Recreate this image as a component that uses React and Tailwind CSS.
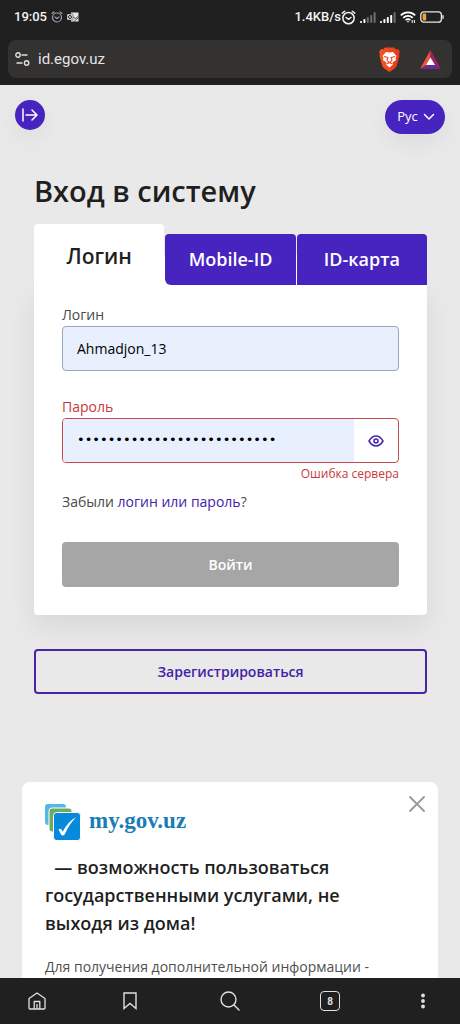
import { useState } from 'react';

const TABS = [
  { id: 'login', label: 'Логин' },
  { id: 'mobile', label: 'Mobile-ID' },
  { id: 'card', label: 'ID-карта' }
];

function AlarmIcon({ className }) {
  return (
    <svg viewBox="0 0 24 24" fill="none" stroke="currentColor" strokeWidth="2.4" strokeLinecap="round" className={className}>
      <circle cx="12" cy="13" r="9" />
      <path d="M8 12l4 3 4-3M2 5l4-3M22 5l-4-3" />
    </svg>
  );
}

function OutlookIcon() {
  return (
    <svg viewBox="0 0 24 20" className="h-[10px] w-3 text-gray-200">
      <path fill="currentColor" d="M8 1h15v18H8z" />
      <path fill="none" stroke="#202020" strokeWidth="1.5" d="M12 10l5 3 6-5M14 19l9-8" />
      <rect x="0" y="4" width="12" height="12" rx="1" fill="currentColor" stroke="#202020" />
      <circle cx="6" cy="10" r="3" fill="none" stroke="#202020" strokeWidth="2" />
    </svg>
  );
}

function SignalIcon({ level }) {
  return (
    <svg viewBox="0 0 16 11" fill="#fff" className="h-[11px] w-4">
      {[2, 4, 6, 8, 11].map((h, i) => (
        <rect key={h} x={i * 3.4} y={11 - h} width="2" height={h} rx="0.8" opacity={i < level ? 1 : 0.35} />
      ))}
    </svg>
  );
}

function WifiIcon() {
  return (
    <svg viewBox="0 0 16 12" fill="none" stroke="#fff" strokeWidth="1.6" className="h-3 w-4">
      <path d="M0.8 4.3a10.4 10.4 0 0 1 14.4 0M3.2 6.8a7 7 0 0 1 9.6 0M5.6 9.2a3.6 3.6 0 0 1 4.8 0" />
      <path d="M6.6 10.2L8 11.8l1.4-1.6z" fill="#fff" stroke="none" />
      <path d="M12.2 9v3M14.4 9v3" strokeWidth="1" />
    </svg>
  );
}

function BatteryIcon() {
  return (
    <svg viewBox="0 0 24 12" className="h-3 w-6">
      <rect x="0.8" y="0.8" width="20.6" height="10.4" rx="3" fill="none" stroke="#e8e8e8" strokeWidth="1.3" />
      <rect x="2.6" y="2.6" width="3.6" height="6.8" rx="1" fill="#e8a33a" />
      <rect x="22.3" y="4" width="1.4" height="4" rx="0.7" fill="#e8e8e8" />
    </svg>
  );
}

function TuneIcon() {
  return (
    <svg viewBox="0 0 15 14" fill="none" stroke="#e2e2e2" strokeWidth="1.4" strokeLinecap="round" className="h-[14px] w-[15px]">
      <circle cx="3" cy="3" r="2.2" />
      <path d="M7 3h5M2 11h5" />
      <circle cx="11.6" cy="11" r="2.2" />
    </svg>
  );
}

function BraveIcon() {
  return (
    <svg viewBox="0 0 42 50" className="h-[25px] w-[21px]">
      <defs>
        <linearGradient id="brave">
          <stop offset="0" stopColor="#f4571e" />
          <stop offset="1" stopColor="#e8361c" />
        </linearGradient>
      </defs>
      <path fill="url(#brave)" d="M12 1h18l4 4 4-1 4 6-2 4 1 4-6 21-5 5-9 6-9-6-5-5L1 18l1-4-2-4 4-6 4 1z" />
      <path fill="#fff" d="M14 10l7 1 7-1 7 8-2 4 1 4-7 5 1 4-7 6-7-6 1-4-7-5 1-4-2-4z" />
      <path fill="none" stroke="#e9441e" strokeWidth="2.2" strokeLinejoin="round" d="M10 19l8 2-2 5 3 4h4l3-4-2-5 8-2M15 34l6-3 6 3M21 29v3" />
    </svg>
  );
}

function BatIcon() {
  return (
    <svg viewBox="0 0 42 38" className="h-[19px] w-[21px]">
      <path fill="#f0523c" d="M21 0L0 38l13-8 8-14z" />
      <path fill="#9e1f63" d="M21 0l21 38-13-8-8-14z" />
      <path fill="#662d91" d="M0 38h42l-13-8H13z" />
      <path fill="#fff" d="M21 15l9 15H12z" />
    </svg>
  );
}

function GovLogo() {
  return (
    <svg viewBox="0 0 36 37" className="h-[37px] w-9">
      <rect x="0" y="0" width="21" height="21" rx="3" fill="#56b9e4" />
      <rect x="4" y="4" width="23" height="24" rx="3" fill="#6cab63" stroke="#fff" />
      <rect x="8.5" y="8.5" width="27" height="28" rx="3" fill="#088adb" stroke="#fff" />
      <path fill="#fff" d="M13.5 25.5c1.5-1.8 3.2-.6 4.2 2.2 3.2-6.2 7.6-11.4 13.6-14.8-4.6 4.6-8.6 10.4-11.5 17.3-1 1.6-3.2 1.6-3.8.2z" />
    </svg>
  );
}

function StatusBar() {
  return (
    <div className="flex h-[34px] items-center justify-between pr-4 pl-[14px] font-[Roboto,sans-serif] text-[13px] font-medium text-gray-100">
      <div className="flex items-center gap-1">
        <span>19:05</span>
        <AlarmIcon className="h-3 w-3 text-gray-400" />
        <OutlookIcon />
      </div>
      <div className="flex items-center gap-1">
        <div className="flex items-center">
          <span>1.4KB/s</span>
          <AlarmIcon className="h-[15px] w-[15px]" />
        </div>
        <SignalIcon level={2} />
        <SignalIcon level={4} />
        <WifiIcon />
        <BatteryIcon />
      </div>
    </div>
  );
}

function AddressBar() {
  return (
    <div className="mx-2 mt-[6px] flex h-[38px] items-center rounded-lg bg-[#333230] pr-[11px] pl-[7px]">
      <button aria-label="Настройки сайта"><TuneIcon /></button>
      <a href="#" className="ml-2 flex-1 font-[Roboto,sans-serif] text-[15px] text-[#e4e4e4]">id.egov.uz</a>
      <button aria-label="Brave Shields"><BraveIcon /></button>
      <button aria-label="Brave Rewards" className="ml-5"><BatIcon /></button>
    </div>
  );
}

function LoginForm() {
  const [login, setLogin] = useState('Ahmadjon_13');
  const [password, setPassword] = useState('abcdefghijklmnopqrstuvwxyz');
  const [visible, setVisible] = useState(false);

  return (
    <form
      className="rounded-b bg-white px-7 pt-5 pb-7 text-sm text-[#4a4a4a] shadow-[0_12px_30px_rgba(0,0,0,0.08)]"
      onSubmit={(e) => e.preventDefault()}
    >
      <label htmlFor="login" className="block leading-5">Логин</label>
      <input
        id="login"
        value={login}
        onChange={(e) => setLogin(e.target.value)}
        className="mt-px h-[45px] w-full rounded border border-[#9ba6bd] bg-[#e8effd] px-[14px] text-sm text-black outline-none"
      />

      <label htmlFor="password" className="mt-[25px] block leading-[22px] text-[#c8383c]">Пароль</label>
      <div className="flex h-[45px] overflow-hidden rounded border border-[#c8484c]">
        <input
          id="password"
          type={visible ? 'text' : 'password'}
          value={password}
          onChange={(e) => setPassword(e.target.value)}
          className={`min-w-0 flex-1 bg-[#e8effd] px-[14px] text-black outline-none ${
            visible ? 'text-sm' : "font-['DejaVu_Sans',sans-serif] text-[13px]"
          }`}
        />
        <button type="button" aria-label="Показать пароль" onClick={() => setVisible(!visible)} className="flex w-11 items-center justify-center">
          <svg viewBox="0 0 16 12" fill="none" stroke="#4724a8" strokeWidth="1.5" className="h-3 w-4">
            <path d="M1 6c2-3.4 4.3-5 7-5s5 1.6 7 5c-2 3.4-4.3 5-7 5s-5-1.6-7-5z" />
            <circle cx="8" cy="6" r="2" />
          </svg>
        </button>
      </div>
      <p className="text-right text-xs leading-[22px] text-[#c8383c]">Ошибка сервера</p>

      <p className="mt-[7px] leading-5">
        Забыли <a href="#" className="text-[#4421a8]">логин или пароль</a>?
      </p>
      <button type="submit" className="mt-[30px] h-[45px] w-full rounded bg-[#a6a6a6] font-semibold text-white">Войти</button>
    </form>
  );
}

function Promo() {
  return (
    <section className="mx-[22px] mt-[88px] rounded-lg bg-white px-[23px] pt-[22px] pb-8">
      <div className="flex items-start justify-between">
        <a href="#" className="flex items-center gap-2">
          <GovLogo />
          <span className="pb-0.5 font-['Liberation_Serif',serif] text-[23px] font-bold text-[#1a7db3]">my.gov.uz</span>
        </a>
        <button aria-label="Закрыть" className="-mt-2 -mr-[10px]">
          <svg viewBox="0 0 16 16" stroke="#9a9a9a" strokeWidth="1.8" strokeLinecap="round" className="h-4 w-4">
            <path d="M1 1l14 14M15 1L1 15" />
          </svg>
        </button>
      </div>
      <h2 className="mt-3 pr-10 text-lg leading-7 font-semibold text-[#1f1f1f]">
        &nbsp; — возможность пользоваться государственными услугами, не выходя из дома!
      </h2>
      <p className="mt-[18px] text-sm leading-6 text-[#4f4f4f]">Для получения дополнительной информации -</p>
    </section>
  );
}

function BottomNav() {
  return (
    <nav className="grid h-[46px] shrink-0 grid-cols-[74fr_112fr_88fr_112fr_74fr] items-center justify-items-center bg-[#202020] text-[#e0e0e0]">
      <button aria-label="Домой">
        <svg viewBox="0 0 18 18" fill="none" stroke="currentColor" strokeWidth="1.3" strokeLinejoin="round" className="h-[18px] w-[18px]">
          <path d="M1 6.5L9 1l8 5.500V16a1 1 0 0 1-1 1H2a1 1 0 0 1-1-1zM6.2 17V9.5h5.6V17M9 12v5" />
        </svg>
      </button>
      <button aria-label="Закладки">
        <svg viewBox="0 0 14 18" fill="none" stroke="currentColor" strokeWidth="1.4" className="h-[18px] w-[14px]">
          <path d="M1 1h12v15.5l-6-5-6 5z" />
        </svg>
      </button>
      <button aria-label="Поиск">
        <svg viewBox="0 0 20 20" fill="none" stroke="currentColor" strokeWidth="1.4" strokeLinecap="round" className="h-5 w-5">
          <circle cx="8.5" cy="8.5" r="7.5" />
          <path d="M14 14l5 5" />
        </svg>
      </button>
      <button aria-label="Вкладки" className="flex h-5 w-5 items-center justify-center rounded border border-[#e0e0e0] font-[Roboto,sans-serif] text-[10px] font-bold">8</button>
      <button aria-label="Меню">
        <svg viewBox="0 0 18 18" fill="currentColor" className="h-[18px] w-[18px]">
          <circle cx="9" cy="3.500" r="1.9" />
          <circle cx="9" cy="9" r="1.9" />
          <circle cx="9" cy="14.500" r="1.9" />
        </svg>
      </button>
    </nav>
  );
}

export default function App() {
  const [tab, setTab] = useState('login');

  return (
    <div className="flex h-screen flex-col bg-[#e9e9e9] font-['Open_Sans','Noto_Sans',sans-serif]">
      <header className="shrink-0 bg-[#202020] pb-[7px]">
        <StatusBar />
        <AddressBar />
      </header>

      <main className="min-h-0 flex-1 overflow-y-auto [scrollbar-width:none]">
        <div className="flex items-start justify-between px-[15px] pt-[15px]">
          <button aria-label="Выйти" className="flex h-[30px] w-[30px] items-center justify-center rounded-full bg-[#4724bf] shadow-[0_8px_24px_rgba(0,0,0,0.06)]">
            <svg viewBox="0 0 16 14" fill="none" stroke="#fff" strokeWidth="1.5" strokeLinecap="round" strokeLinejoin="round" className="h-[14px] w-4">
              <path d="M1 1v12M4 7h11M10 2l5 5-5 5" />
            </svg>
          </button>
          <button className="flex h-[34px] w-[60px] items-center justify-center gap-[5px] rounded-full bg-[#4724bf] pl-0.5 text-[13px] text-white shadow-[0_8px_24px_rgba(0,0,0,0.06)]">
            Рус
            <svg viewBox="0 0 12 8" fill="none" stroke="currentColor" strokeWidth="1.5" strokeLinecap="round" strokeLinejoin="round" className="h-2 w-3">
              <path d="M1.5 1.5L6 6l4.5-4.5" />
            </svg>
          </button>
        </div>

        <div className="pr-[33px] pl-[34px]">
          <h1 className="mt-9 text-[29px] leading-[42px] font-semibold text-[#1f1f1f]">Вход в систему</h1>
          <div className="relative z-10 mt-3 flex items-end gap-px bg-[linear-gradient(#e9e9e9_50%,#fff_50%)]">
            {TABS.map((t) => (
              <button
                key={t.id}
                onClick={() => setTab(t.id)}
                className={`flex-1 rounded-t font-semibold ${
                  tab === t.id
                    ? 'h-[61px] bg-white pt-1 text-[21px] text-[#1f1f1f]'
                    : 'h-[51px] bg-[#4724bf] pb-0.5 text-lg text-white nth-2:rounded-bl-md'
                }`}
              >
                {t.label}
              </button>
            ))}
          </div>
          <LoginForm />
          <button className="mt-[34px] h-[45px] w-full rounded border-2 border-[#4724a8] text-sm font-semibold text-[#4421a8]">
            Зарегистрироваться
          </button>
        </div>

        <Promo />
      </main>

      <BottomNav />
    </div>
  );
}
